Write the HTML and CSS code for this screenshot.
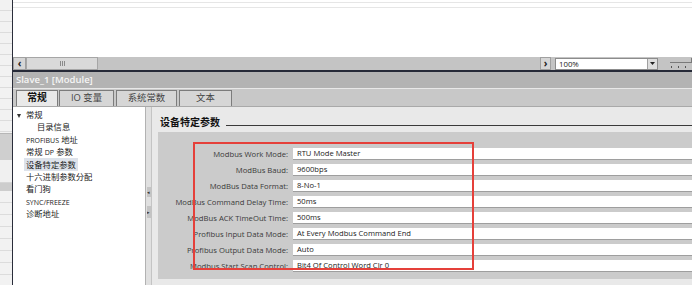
FILE: index.html
```html
<!DOCTYPE html>
<html lang="zh">
<head>
<meta charset="utf-8">
<title>Slave_1 [Module]</title>
<link rel="stylesheet" href="styles.css">
</head>
<body>
<div class="app">
  <div class="strip">
    <div class="s-a"></div>
    <div class="s-b"></div>
    <div class="s-c"></div>
    <div class="s-d"></div>
    <div class="s-e"></div>
  </div>
  <div class="divider"></div>
  <div class="main">
    <div class="canvas">
      <div class="ln"></div>
      <div class="ln"></div>
    </div>
    <div class="hscroll">
      <div class="sb-btn">‹</div>
      <div class="sb-thumb">
        <svg width="5" height="5" viewBox="0 0 5 5"><path d="M0.5 0v5M2.5 0v5M4.5 0v5" stroke="#8a8a8a" stroke-width="1"/></svg>
      </div>
      <div class="sb-space"></div>
      <div class="sb-btn sb-right">›</div>
      <div class="combo">
        <span class="combo-text">100%</span>
        <span class="combo-btn"><svg width="5" height="3" viewBox="0 0 5 3"><path d="M0 0h5L2.5 3z" fill="#222"/></svg></span>
      </div>
      <svg class="slider" width="22" height="13" viewBox="0 0 22 13">
        <path d="M0 5.5h22" stroke="#7a7a7a" stroke-width="1"/>
        <path d="M21.5 1v5" stroke="#7a7a7a" stroke-width="1"/>
        <path d="M1.5 9v2M8.5 9v2M15.5 9v2" stroke="#555" stroke-width="1"/>
      </svg>
    </div>
    <div class="darkline"></div>
    <div class="titlebar">Slave_1 [Module]</div>
    <div class="sep"></div>
    <div class="tabs">
      <div class="tab active t1">常规</div>
      <div class="tab t2">IO 变量</div>
      <div class="tab t3">系统常数</div>
      <div class="tab t4">文本</div>
    </div>
    <div class="body">
      <div class="tree">
        <div class="item top"><span class="caret"></span>常规</div>
        <div class="item sub">目录信息</div>
        <div class="item"><span class="sm">PROFIBUS</span> 地址</div>
        <div class="item">常规 <span class="sm">DP</span> 参数</div>
        <div class="item"><span class="sel">设备特定参数</span></div>
        <div class="item">十六进制参数分配</div>
        <div class="item">看门狗</div>
        <div class="item"><span class="sm">SYNC/FREEZE</span></div>
        <div class="item">诊断地址</div>
      </div>
      <div class="splitter">
        <div class="sp-btn">◂</div>
        <div class="sp-btn sp-b2">▸</div>
      </div>
      <div class="content">
        <div class="heading">
          <span class="h-text">设备特定参数</span>
          <span class="h-rule"></span>
        </div>
        <div class="panel">
          <div class="row"><span class="lbl">Modbus Work Mode:</span><span class="val">RTU Mode Master</span></div>
          <div class="row"><span class="lbl">ModBus Baud:</span><span class="val">9600bps</span></div>
          <div class="row"><span class="lbl">ModBus Data Format:</span><span class="val">8-No-1</span></div>
          <div class="row"><span class="lbl">ModBus Command Delay Time:</span><span class="val">50ms</span></div>
          <div class="row"><span class="lbl">ModBus ACK TimeOut Time:</span><span class="val">500ms</span></div>
          <div class="row"><span class="lbl">Profibus Input Data Mode:</span><span class="val">At Every Modbus Command End</span></div>
          <div class="row"><span class="lbl">Profibus Output Data Mode:</span><span class="val">Auto</span></div>
          <div class="row last"><span class="lbl">Modbus Start Scan Control:</span><span class="val">Bit4 Of Control Word Clr 0</span></div>
          <div class="redbox"></div>
        </div>
      </div>
    </div>
  </div>
</div>
</body>
</html>
```
FILE: styles.css
```css
* { box-sizing: border-box; margin: 0; padding: 0; }
html, body { width: 692px; height: 285px; overflow: hidden; }
body {
  font-family: "Open Sans", "Noto Sans CJK SC", sans-serif;
  background: #fff;
  color: #222;
}
.app { display: flex; height: 285px; }

/* left strip */
.strip { width: 12px; display: flex; flex-direction: column; background: #f1f1f1; }
.s-a { height: 133px; background: repeating-linear-gradient(to bottom, #f2f2f2 0, #f2f2f2 10px, #dcdcdc 10px, #dcdcdc 11px); }
.s-b { height: 27px; background: #cfcfcf; border-top: 1px solid #b6b6b6; }
.s-c { height: 23px; background: #f0f0f0; border-bottom: 1px solid #d6d6d6; }
.s-d { height: 8px; background: #cdcdcd; }
.s-e { flex: 1; background: repeating-linear-gradient(to bottom, #f2f2f2 0, #f2f2f2 11px, #dcdcdc 11px, #dcdcdc 12px); }
.divider { width: 1px; background: #2a2d3a; }

.main { flex: 1; display: flex; flex-direction: column; min-width: 0; }

/* top canvas */
.canvas { height: 57px; background: #fff; padding-top: 2px; }
.canvas .ln { height: 1px; background: #e6e6e6; margin-bottom: 4px; }

/* horizontal scrollbar row */
.hscroll { height: 13px; background: #c4c4c4; display: flex; align-items: center; }
.sb-btn {
  width: 13px; height: 13px; background: #d6d6d6; border: 1px solid #a0a0a0;
  font-size: 10px; line-height: 10px; text-align: center; color: #222; font-weight: 700;
}
.sb-thumb {
  width: 72px; height: 13px; background: #d9d9d9; border: 1px solid #a6a6a6;
  display: flex; align-items: center; justify-content: center;
}
.sb-space { flex: 1; }
.sb-right { width: 11px; margin-right: 4px; }
.combo {
  width: 103px; height: 12px; background: #fff; border: 1px solid #8c8c8c;
  display: flex; align-items: stretch;
}
.combo-text { flex: 1; font-size: 7.8px; line-height: 10px; padding-left: 3px; color: #222; }
.combo-btn {
  width: 10px; background: #dedede; border-left: 1px solid #a0a0a0;
  display: flex; align-items: center; justify-content: center;
}
.slider { margin-left: 12px; }

.darkline { height: 2px; background: #262a38; }
.titlebar {
  height: 16px; background: #b3b3b3; color: #f6f6f6;
  font-size: 9.5px; font-weight: 600; line-height: 16px; padding-left: 3px;
}
.sep { height: 1px; background: #e8e8e8; }

/* tabs */
.tabs { height: 17px; background: #c8c8c8; display: flex; align-items: flex-end; padding-left: 3px; }
.tab {
  height: 16px; border: 1px solid #7c7c7c; border-bottom: none;
  background: #d6d6d6; color: #444; font-size: 9.4px; line-height: 14px; text-align: center;
}
.tab.active { background: #e9e9e9; color: #111; font-weight: 700; font-size: 9.8px; }
.t1 { width: 42px; margin-right: 1px; }
.t2 { width: 55px; margin-right: 2px; }
.t3 { width: 61px; margin-right: 2px; }
.t4 { width: 53px; }

/* body */
.body { flex: 1; display: flex; border-top: 1px solid #a9a9a9; min-height: 0; }
.tree { width: 132px; background: #fff; padding-top: 2px; }
.item {
  height: 12.4px; line-height: 12.4px; font-size: 8.3px; color: #222;
  padding-left: 13px; white-space: nowrap;
}
.item.top { padding-left: 3px; }
.item.sub { padding-left: 24px; }
.caret {
  display: inline-block; width: 0; height: 0; vertical-align: middle;
  border-left: 2.5px solid transparent; border-right: 2.5px solid transparent;
  border-top: 4px solid #333; margin-right: 5px; margin-left: 1px;
}
.sm { font-size: 7px; }
.sel { background: #dde2ea; padding: 1px 2px; margin-left: -2px; }

.splitter {
  width: 7px; background: #e0e0e0; border-left: 1px solid #b2b2b2; border-right: 1px solid #c4c4c4;
  display: flex; flex-direction: column; align-items: center; padding-top: 80px;
}
.sp-btn {
  width: 4px; height: 10px; background: #c4c4c4; font-size: 5px; line-height: 10px;
  color: #333; text-align: center; overflow: hidden;
}
.sp-b2 { margin-top: 9px; height: 12px; line-height: 12px; }

.content { flex: 1; background: #e9e9e9; padding-left: 6px; min-width: 0; }
.heading { height: 25px; display: flex; align-items: flex-start; padding-left: 2px; padding-top: 9px; }
.h-text { font-size: 10px; font-weight: 700; line-height: 12px; color: #111; white-space: nowrap; }
.h-rule { flex: 1; height: 1px; background: #3a3a3a; margin-left: 6px; margin-top: 9px; }

.panel { position: relative; background: #cbcbcb; padding: 16px 0 7px 0; display: flex; flex-direction: column; }
.row { display: flex; height: 16px; align-items: flex-start; }
.row.last { height: 12px; }
.lbl {
  width: 130px; text-align: right; font-size: 7.7px; line-height: 12px; color: #3a3a3a;
  white-space: nowrap;
}
.val {
  flex: 1; margin-left: 5px; height: 12px; background: #fff; border-bottom: 1px solid #9e9e9e;
  font-size: 7.6px; line-height: 11px; padding-left: 4px; color: #222; white-space: nowrap;
}
.redbox {
  position: absolute; left: 35px; top: 10px; width: 281px; height: 128px;
  border: 2px solid #e5403a;
}
```
